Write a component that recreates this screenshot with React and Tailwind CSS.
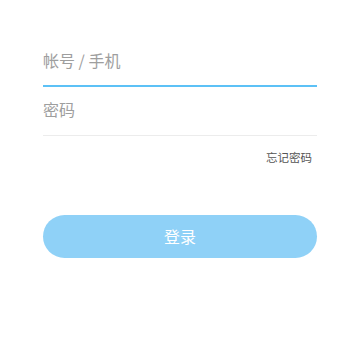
import React from "react";

const App = () => {
    return (
        <div
            className="w-[360px] h-[360px] bg-white px-[43px] pt-[37px]"
            style={{ fontFamily: '"Noto Sans CJK SC", "Noto Sans", sans-serif' }}
        >
            <div className="h-[48px] pb-[3px] flex items-center">
                <input
                    type="text"
                    placeholder="帐号 / 手机"
                    className="w-full bg-transparent outline-none text-[16px] text-[#333] placeholder:text-[#9e9e9e]"
                />
            </div>
            <div className="h-[1.5px] bg-[#5cc1f6]" />
            <div className="h-[48px] pb-[3px] flex items-center">
                <input
                    type="password"
                    placeholder="密码"
                    className="w-full bg-transparent outline-none text-[16px] text-[#333] placeholder:text-[#9e9e9e]"
                />
            </div>
            <div className="h-px bg-[#ececec]" />
            <div className="mt-[13px] flex justify-end pr-[5px]">
                <span className="text-[11.5px] leading-[16px] text-[#555]">
                    忘记密码
                </span>
            </div>
            <button className="mt-[50px] w-full h-[43px] rounded-full bg-[#8fd1f7] text-white text-[16px] flex items-center justify-center">
                登录
            </button>
        </div>
    );
};

export default App;
